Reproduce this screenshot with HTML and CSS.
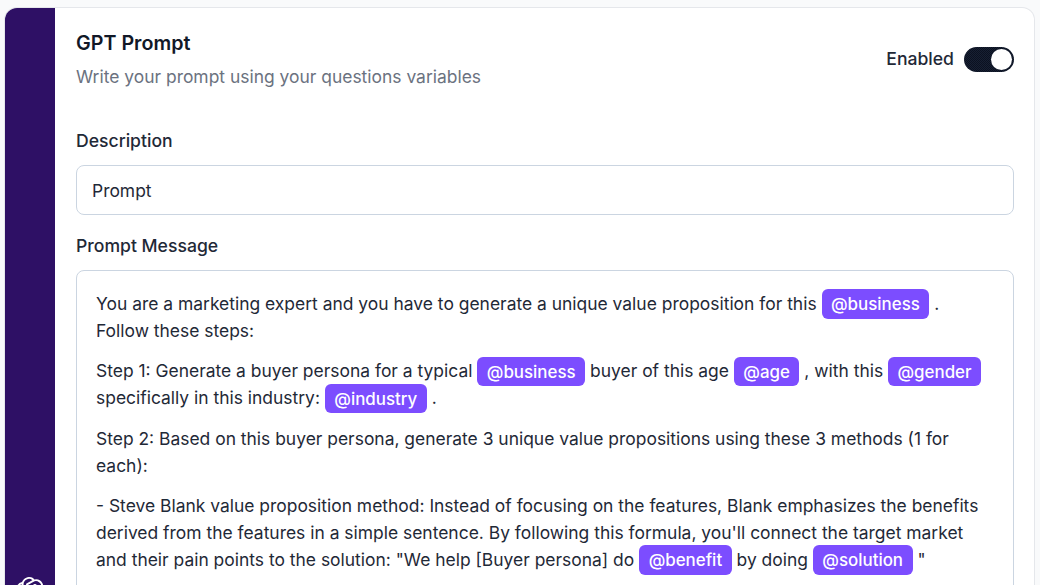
FILE: index.html
```html
<!DOCTYPE html>
<html lang="en">
<head>
<meta charset="utf-8">
<title>GPT Prompt</title>
<link rel="stylesheet" href="styles.css">
</head>
<body>
<section class="card">
  <aside class="rail">
    <svg class="logo" viewBox="0 0 24 24" fill="#fff">
      <path d="M22.2819 9.8211a5.9847 5.9847 0 0 0-.5157-4.9108 6.0462 6.0462 0 0 0-6.5098-2.9A6.0651 6.0651 0 0 0 4.9807 4.1818a5.9847 5.9847 0 0 0-3.9977 2.9 6.0462 6.0462 0 0 0 .7427 7.0966 5.98 5.98 0 0 0 .511 4.9107 6.051 6.051 0 0 0 6.5146 2.9001A5.9847 5.9847 0 0 0 13.2599 24a6.0557 6.0557 0 0 0 5.7718-4.2058 5.9894 5.9894 0 0 0 3.9977-2.9001 6.0557 6.0557 0 0 0-.7475-7.0729zm-9.022 12.6081a4.4755 4.4755 0 0 1-2.8764-1.0408l.1419-.0804 4.7783-2.7582a.7948.7948 0 0 0 .3927-.6813v-6.7369l2.02 1.1686a.071.071 0 0 1 .038.052v5.5826a4.504 4.504 0 0 1-4.4945 4.4944zm-9.6607-4.1254a4.4708 4.4708 0 0 1-.5346-3.0137l.142.0852 4.783 2.7582a.7712.7712 0 0 0 .7806 0l5.8428-3.3685v2.3324a.0804.0804 0 0 1-.0332.0615L9.74 19.9502a4.4992 4.4992 0 0 1-6.1408-1.6464zM2.3408 7.8956a4.485 4.485 0 0 1 2.3655-1.9728V11.6a.7664.7664 0 0 0 .3879.6765l5.8144 3.3543-2.0201 1.1685a.0757.0757 0 0 1-.071 0l-4.8303-2.7865A4.504 4.504 0 0 1 2.3408 7.872zm16.5963 3.8558L13.1038 8.364 15.1192 7.2a.0757.0757 0 0 1 .071 0l4.8303 2.7913a4.4944 4.4944 0 0 1-.6765 8.1042v-5.6772a.79.79 0 0 0-.407-.667zm2.0107-3.0231l-.142-.0852-4.7735-2.7818a.7759.7759 0 0 0-.7854 0L9.409 9.2297V6.8974a.0662.0662 0 0 1 .0284-.0615l4.8303-2.7866a4.4992 4.4992 0 0 1 6.6802 4.66zM8.3065 12.863l-2.02-1.1638a.0804.0804 0 0 1-.038-.0567V6.0742a4.4992 4.4992 0 0 1 7.3757-3.4537l-.142.0805L8.704 5.459a.7948.7948 0 0 0-.3927.6813zm1.0976-2.3654l2.602-1.4998 2.6069 1.4998v2.9994l-2.5974 1.4997-2.6067-1.4997Z"/>
    </svg>
  </aside>
  <div class="main">
    <header class="head">
      <div>
        <h2 class="title">GPT Prompt</h2>
        <p class="subtitle">Write your prompt using your questions variables</p>
      </div>
      <div class="status">
        <span class="status-text">Enabled</span>
        <span class="toggle"><span class="knob"></span></span>
      </div>
    </header>
    <label class="label">Description</label>
    <div class="input">Prompt</div>
    <label class="label label-msg">Prompt Message</label>
    <div class="editor">
      <p>You are a marketing expert and you have to generate a unique value proposition for this <span class="tag">@business</span> .<br>Follow these steps:</p>
      <p>Step 1: Generate a buyer persona for a typical <span class="tag">@business</span> buyer of this age <span class="tag">@age</span> , with this <span class="tag">@gender</span> specifically in this industry: <span class="tag">@industry</span> .</p>
      <p>Step 2: Based on this buyer persona, generate 3 unique value propositions using these 3 methods (1 for each):</p>
      <p>- Steve Blank value proposition method: Instead of focusing on the features, Blank emphasizes the benefits derived from the features in a simple sentence. By following this formula, you'll connect the target market and their pain points to the solution: "We help [Buyer persona] do <span class="tag">@benefit</span> by doing <span class="tag">@solution</span> "</p>
    </div>
  </div>
</section>
</body>
</html>
```
FILE: styles.css
```css
* { box-sizing: border-box; }
html, body { height: 100%; }
body {
  margin: 0;
  padding: 8px 6px 0 5px;
  background: #f9fafb;
  font-family: Inter, "Liberation Sans", sans-serif;
  font-size: 17.45px;
  color: #1f2937;
  overflow: hidden;
}
.card {
  display: flex;
  background: #fff;
  border-radius: 12px;
  box-shadow: 0 0 0 1px #e5e7eb;
  min-height: 700px;
  overflow: hidden;
}
.rail {
  flex: 0 0 50px;
  background: #2e1065;
  display: flex;
  justify-content: center;
  align-items: flex-start;
  padding-top: 569px;
}
.logo { width: 29px; height: 29px; flex: none; }
.main { flex: 1; padding: 23px 20px 0 21px; }
.head {
  display: flex;
  justify-content: space-between;
  align-items: flex-start;
  margin-bottom: 40px;
}
.title {
  margin: 0;
  font-size: 19.7px;
  line-height: 24px;
  font-weight: 600;
  color: #111827;
}
.subtitle {
  margin: 10px 0 0;
  line-height: 24px;
  color: #6b7280;
}
.status {
  display: flex;
  align-items: center;
  gap: 10px;
  margin-top: 16px;
  line-height: 25px;
  font-size: 17.6px;
  font-weight: 500;
}
.status-text { margin-top: -2px; }
.toggle {
  width: 50px;
  height: 25px;
  padding: 2px;
  display: flex;
  justify-content: flex-end;
  border-radius: 13px;
  background: repeating-conic-gradient(#0b1120 0 25%, #172033 0 50%) 0 0 / 2px 2px;
}
.knob {
  width: 21px;
  height: 21px;
  border-radius: 50%;
  background: #fff;
}
.label {
  display: block;
  font-size: 17.6px;
  font-weight: 500;
  line-height: 24px;
  color: #1f2937;
}
.input {
  margin-top: 12px;
  height: 50px;
  padding: 0 15px;
  display: flex;
  align-items: center;
  background: #fff;
  border: 1px solid #cbd5e1;
  border-radius: 8px;
}
.label-msg { margin-top: 19px; }
.editor {
  margin-top: 12px;
  padding: 19px 19px;
  min-height: 400px;
  border: 1px solid #cbd5e1;
  border-radius: 8px;
  line-height: 27px;
}
.editor p { margin: 0 0 13.400px; }
.tag {
  padding: 4.750px 9.500px;
  font-size: 16.900px;
  line-height: 1;
  font-weight: 500;
  border-radius: 6px;
  background: #7c4dff;
  color: #fff;
}
```
